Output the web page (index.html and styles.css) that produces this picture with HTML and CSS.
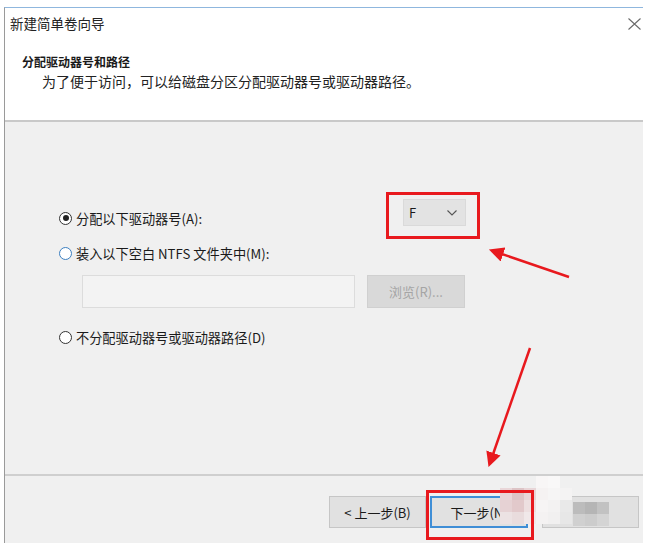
FILE: index.html
```html
<!DOCTYPE html>
<html lang="zh">
<head>
<meta charset="utf-8">
<link rel="stylesheet" href="styles.css">
</head>
<body>
<div class="window">
  <div class="top">
    <div class="titlebar">
      <span class="title">新建简单卷向导</span>
      <svg class="close" width="13" height="12" viewBox="0 0 13 12"><path d="M0.5 0.5L12.5 11.5M12.5 0.5L0.5 11.5" stroke="#6a6a6a" stroke-width="1.1" fill="none"/></svg>
    </div>
    <div class="header">
      <div class="h1">分配驱动器号和路径</div>
      <div class="h2">为了便于访问，可以给磁盘分区分配驱动器号或驱动器路径。</div>
    </div>
  </div>
  <div class="body">
    <div class="row1">
      <label class="opt"><span class="radio checked"></span>分配以下驱动器号(A):</label>
      <div class="select"><span>F</span><svg width="10" height="6" viewBox="0 0 10 6"><path d="M0.5 0.5L5 5L9.5 0.5" stroke="#555" stroke-width="1.1" fill="none"/></svg></div>
    </div>
    <label class="opt row2"><span class="radio focus"></span>装入以下空白 NTFS 文件夹中(M):</label>
    <div class="pathrow">
      <div class="textbox"></div>
      <div class="btn disabled">浏览(R)...</div>
    </div>
    <label class="opt row3"><span class="radio"></span>不分配驱动器号或驱动器路径(D)</label>
  </div>
  <div class="footer">
    <div class="btn">&lt; 上一步(B)</div>
    <div class="btn primary">下一步(N)</div>
    <div class="btn">取消</div>
  </div>
</div>
<div class="mosaic">
  <i style="left:0;top:15px;background:#e9d6d8"></i>
  <i style="left:12px;top:15px;background:#ddc4c6"></i>
  <i style="left:24px;top:15px;background:#e8d5d7"></i>
  <i style="left:0;top:27px;background:#e6d2d4"></i>
  <i style="left:12px;top:27px;background:#e2c9cb"></i>
  <i style="left:24px;top:27px;background:#eddfe0"></i>
  <i style="left:0;top:39px;background:#ece2e3"></i>
  <i style="left:12px;top:39px;background:#e9dcdd"></i>
  <i style="left:24px;top:39px;background:#f0e8e9"></i>
  <i style="left:36px;top:15px;background:#f5f2f2"></i>
  <i style="left:36px;top:27px;background:#f6f4f4"></i>
  <i style="left:36px;top:39px;background:#f4f2f2"></i>
  <i style="left:48px;top:27px;background:#f3f2f2"></i>
  <i style="left:48px;top:39px;background:#f1f0f0"></i>
  <i style="left:36px;top:3px;background:#f8f6f6"></i>
  <i style="left:48px;top:3px;background:#f9f8f8"></i>
  <i style="left:48px;top:15px;background:#f6f5f5"></i>
  <i style="left:60px;top:15px;background:#f4f3f3"></i>
  <i style="left:60px;top:27px;background:#e9e9e9"></i>
  <i style="left:60px;top:39px;background:#e7e7e7"></i>
  <i style="left:73px;top:29px;background:#bcbcbc"></i>
  <i style="left:85px;top:29px;background:#b5b5b5"></i>
  <i style="left:97px;top:29px;background:#c2c2c2"></i>
  <i style="left:73px;top:41px;background:#d0d0d0"></i>
  <i style="left:85px;top:41px;background:#cccccc"></i>
  <i style="left:97px;top:41px;background:#d4d4d4"></i>
</div>
<svg class="annot" width="652" height="552" viewBox="0 0 652 552">
  <defs>
    <marker id="ah" markerWidth="6" markerHeight="6" refX="3" refY="3" orient="auto" markerUnits="strokeWidth">
      <path d="M0 0L6 3L0 6z" fill="#e8191e"/>
    </marker>
  </defs>
  <rect x="387.5" y="193.5" width="91" height="44" fill="none" stroke="#e8191e" stroke-width="3"/>
  <rect x="427.5" y="491.5" width="105" height="47" fill="none" stroke="#e8191e" stroke-width="3"/>
  <line x1="569" y1="277" x2="496" y2="252" stroke="#e8191e" stroke-width="2.5" marker-end="url(#ah)"/>
  <line x1="530" y1="348" x2="491" y2="460" stroke="#e8191e" stroke-width="2.5" marker-end="url(#ah)"/>
</svg>
</body>
</html>
```
FILE: styles.css
```css
html, body {
  margin: 0;
  padding: 0;
  background: #ffffff;
}
body {
  width: 652px;
  height: 552px;
  position: relative;
  overflow: hidden;
  font-family: "Noto Sans CJK SC", "Noto Sans", sans-serif;
  color: #1a1a1a;
}
.window {
  margin: 7px 0 0 4px;
  width: 639px;
  height: 536px;
  border-left: 1px solid #9a9a9a;
  border-top: 1px solid #8fb7de;
  box-sizing: border-box;
  display: flex;
  flex-direction: column;
  background: #f0f0f0;
}
.top {
  background: #ffffff;
  height: 114px;
  border-bottom: 2px solid #c9c9c9;
  box-sizing: border-box;
}
.titlebar {
  height: 30px;
  display: flex;
  align-items: center;
  justify-content: space-between;
  padding: 0 2px 0 5px;
}
.title {
  font-size: 13.5px;
  color: #222;
}
.close {
  margin-top: 1px;
}
.header {
  padding: 15px 0 0 17px;
}
.h1 {
  font-size: 12px;
  font-weight: bold;
  line-height: 18px;
}
.h2 {
  font-size: 14px;
  line-height: 21px;
  padding-left: 20px;
  color: #222;
}
.body {
  flex: 1;
  padding: 77px 0 0 54px;
  font-size: 13.2px;
}
.opt {
  display: flex;
  align-items: center;
  height: 20px;
  color: #1a1a1a;
}
.radio {
  width: 13px;
  height: 13px;
  border: 1px solid #333;
  border-radius: 50%;
  background: #fff;
  margin-right: 4px;
  box-sizing: border-box;
  position: relative;
}
.radio.checked::after {
  content: "";
  position: absolute;
  left: 2.5px;
  top: 2.5px;
  width: 6px;
  height: 6px;
  border-radius: 50%;
  background: #222;
}
.radio.focus {
  border-color: #3c7fc0;
}
.row1 {
  display: flex;
  align-items: flex-start;
}
.row1 .opt {
  width: 344px;
  margin-top: 9px;
}
.select {
  width: 63px;
  height: 27px;
  background: #e3e3e3;
  border: 1px solid #dadada;
  box-sizing: border-box;
  display: flex;
  align-items: center;
  justify-content: space-between;
  padding: 0 8px 0 5px;
  font-size: 13px;
}
.row2 {
  margin-top: 15px;
}
.pathrow {
  display: flex;
  gap: 12px;
  margin: 12px 0 0 23px;
}
.textbox {
  width: 273px;
  height: 33px;
  background: #f3f3f3;
  border: 1px solid #dcdcdc;
  box-sizing: border-box;
}
.btn {
  width: 97px;
  height: 32px;
  background: #e1e1e1;
  border: 1px solid #c6c6c6;
  box-sizing: border-box;
  display: flex;
  align-items: center;
  justify-content: center;
  font-size: 13px;
  color: #1a1a1a;
}
.btn.disabled {
  color: #a5a5a5;
  background: #d9d9d9;
  border-color: #d0d0d0;
  width: 98px;
  height: 33px;
}
.row3 {
  margin-top: 19px;
}
.footer {
  height: 69px;
  border-top: 2px solid #cfcfcf;
  box-sizing: border-box;
  display: flex;
  justify-content: flex-end;
  align-items: flex-start;
  gap: 4px;
  padding: 20px 4px 0 0;
}
.btn.primary {
  border: 2px solid #3f8ed6;
  width: 98px;
}
.footer .btn:last-child {
  margin-left: 10px;
  color: transparent;
}
.mosaic {
  position: absolute;
  left: 500px;
  top: 473px;
  width: 130px;
  height: 60px;
}
.mosaic i {
  position: absolute;
  width: 12px;
  height: 12px;
}
.annot {
  position: absolute;
  left: 0;
  top: 0;
  pointer-events: none;
}
```
